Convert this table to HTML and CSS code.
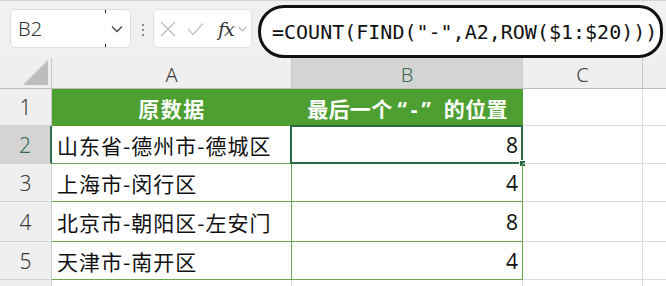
FILE: index.html
```html
<!DOCTYPE html>
<html lang="zh-CN">
<head>
<meta charset="utf-8">
<title>COUNT FIND</title>
<link rel="stylesheet" href="styles.css">
</head>
<body>
<div class="app">
  <div class="toolbar">
    <div class="namebox">
      <span class="name">B2</span>
      <span class="nb-divider"></span>
      <svg class="chev" width="12" height="8" viewBox="0 0 12 8"><path d="M1 1.5 L6 6.5 L11 1.5" fill="none" stroke="#444" stroke-width="1.3"/></svg>
    </div>
    <div class="dots"><i></i><i></i><i></i></div>
    <div class="funcbox">
      <svg width="16" height="16" viewBox="0 0 16 16"><path d="M1 1 L15 15 M15 1 L1 15" stroke="#bdbdbd" stroke-width="1.4" fill="none"/></svg>
      <svg width="17" height="14" viewBox="0 0 17 14"><path d="M1 7 L6 12.5 L16 1.5" stroke="#c4c4c4" stroke-width="1.4" fill="none"/></svg>
      <span class="fx">fx</span>
      <svg width="9" height="6" viewBox="0 0 9 6"><path d="M0.8 1 L4.5 4.8 L8.2 1" fill="none" stroke="#aaa" stroke-width="1.1"/></svg>
    </div>
    <div class="formula">=COUNT(FIND("-",A2,ROW($1:$20)))</div>
  </div>

  <div class="sheet">
    <div class="corner"><svg width="25" height="25" viewBox="0 0 25 25"><path d="M25 0 L25 25 L0 25 Z" fill="#bdbdbd"/></svg></div>
    <div class="colhead">A</div>
    <div class="colhead sel">B</div>
    <div class="colhead">C</div>
    <div class="colhead last"></div>

    <div class="rowhead">1</div>
    <div class="cell th wide">原数据</div>
    <div class="cell th"><span>最后一个<span class="q">“-”</span>的位置</span></div>
    <div class="cell plain"></div>
    <div class="cell plain last"></div>

    <div class="rowhead sel">2</div>
    <div class="cell tb">山东省-德州市-德城区</div>
    <div class="cell tb num active">8<span class="selbox"></span><span class="handle"></span></div>
    <div class="cell plain"></div>
    <div class="cell plain last"></div>

    <div class="rowhead">3</div>
    <div class="cell tb">上海市-闵行区</div>
    <div class="cell tb num">4</div>
    <div class="cell plain"></div>
    <div class="cell plain last"></div>

    <div class="rowhead">4</div>
    <div class="cell tb">北京市-朝阳区-左安门</div>
    <div class="cell tb num">8</div>
    <div class="cell plain"></div>
    <div class="cell plain last"></div>

    <div class="rowhead">5</div>
    <div class="cell tb">天津市-南开区</div>
    <div class="cell tb num">4</div>
    <div class="cell plain"></div>
    <div class="cell plain last"></div>

    <div class="rowhead"></div>
    <div class="cell plain"></div>
    <div class="cell plain"></div>
    <div class="cell plain"></div>
    <div class="cell plain last"></div>
  </div>
</div>
</body>
</html>
```

FILE: styles.css
```css
* { box-sizing: border-box; }
html, body { margin: 0; padding: 0; }
body {
  width: 666px;
  height: 286px;
  overflow: hidden;
  background: #f0f0f0;
  font-family: "Noto Sans", "Noto Sans CJK SC", sans-serif;
}
.app { width: 666px; height: 286px; border-top: 1px solid #d4d4d4; }

.toolbar {
  height: 57px;
  display: flex;
  align-items: flex-start;
  background: #f0f0f0;
}
.namebox {
  margin: 8px 0 0 10px;
  width: 121px;
  height: 39px;
  background: #fff;
  border: 1px solid #dedede;
  border-radius: 5px;
  display: flex;
  align-items: center;
  position: relative;
}
.name {
  font-family: "Noto Sans", sans-serif;
  font-size: 20px;
  font-weight: 300;
  color: #333;
  padding-left: 7px;
  flex: 1;
}
.nb-divider {
  width: 1px;
  height: 37px;
  background: linear-gradient(#222 0 3px, transparent 3px 34px, #222 34px);
  margin-right: 5px;
}
.chev { margin-right: 7px; }

.dots {
  margin: 23px 0 0 11px;
  display: flex;
  flex-direction: column;
  gap: 3px;
}
.dots i { display: block; width: 2px; height: 2px; background: #8a8a8a; }

.funcbox {
  margin: 8px 0 0 9px;
  width: 99px;
  height: 39px;
  background: #fff;
  border: 1px solid #e2e2e2;
  border-radius: 5px;
  display: flex;
  align-items: center;
  padding-left: 6px;
}
.funcbox svg:nth-child(1) { margin-right: 11px; }
.funcbox svg:nth-child(2) { margin-right: 14px; }
.fx {
  font-family: "DejaVu Serif", "Liberation Serif", serif;
  font-style: italic;
  font-size: 19px;
  color: #333;
  margin-right: 4px;
  letter-spacing: -1px;
}

.formula {
  margin: 4px 0 0 6px;
  width: 405px;
  height: 53px;
  background: #fff;
  border: 3px solid #111;
  border-radius: 26px 24px 24px 26px;
  display: flex;
  align-items: center;
  padding-left: 11px;
  font-family: "DejaVu Sans Mono", "Liberation Mono", monospace;
  font-size: 20px;
  color: #111;
  white-space: nowrap;
}

.sheet {
  display: grid;
  grid-template-columns: 52px 240px 231px 120px 23px;
  grid-template-rows: 31px 37px 38px 38px 40px 38px 10px;
  background: #fff;
}
.corner, .colhead, .rowhead {
  background: #efefef;
  border-right: 1px solid #c9c9c9;
  border-bottom: 1px solid #bcbcbc;
}
.corner {
  display: flex;
  align-items: flex-end;
  justify-content: flex-end;
  padding: 0 3px 3px 0;
}
.colhead {
  display: flex;
  align-items: center;
  justify-content: center;
  font-size: 20px;
  color: #3a3a3a;
  font-weight: 300;
  padding-top: 3px;
}
.colhead.sel { background: #d4d4d4; color: #3d6a4d; }
.colhead.last { border-right: none; }
.rowhead {
  display: flex;
  align-items: center;
  justify-content: center;
  font-size: 21px;
  color: #3a3a3a;
  font-weight: 300;
  border-bottom-color: #d2d2d2;
}
.rowhead.sel {
  background: #d4d4d4;
  color: #2f6a48;
  border-right: 2px solid #2f6f49;
}

.cell {
  display: flex;
  align-items: center;
  font-family: "Noto Sans CJK SC", sans-serif;
  font-size: 21px;
  letter-spacing: 1px;
  color: #111;
  padding: 0 5px;
  white-space: nowrap;
  position: relative;
}
.cell.plain {
  border-right: 1px solid #dadada;
  border-bottom: 1px solid #dadada;
}
.cell.plain.last { border-right: none; }
.cell.th {
  background: #4e9f31;
  color: #fff;
  font-weight: 700;
  justify-content: center;
  letter-spacing: 0.3px;
}
.cell.th.wide { letter-spacing: 1.5px; }
.cell.th .q {
  font-family: "Noto Sans", sans-serif;
  letter-spacing: 4px;
  margin: 0 9px 0 5px;
}
.cell.tb {
  border-right: 1px solid #6aa84f;
  border-bottom: 1px solid #6aa84f;
}
.cell.num {
  justify-content: flex-end;
  font-family: "Open Sans", "Noto Sans", sans-serif;
  font-size: 21px;
  letter-spacing: 0;
  padding-right: 4px;
}
.selbox {
  position: absolute;
  left: -2px;
  top: -1px;
  right: -1px;
  bottom: -1px;
  border: 2px solid #2b6c47;
}
.handle {
  position: absolute;
  right: -4px;
  bottom: -4px;
  width: 7px;
  height: 7px;
  background: #2b6c47;
  border: 1px solid #fff;
}
```
